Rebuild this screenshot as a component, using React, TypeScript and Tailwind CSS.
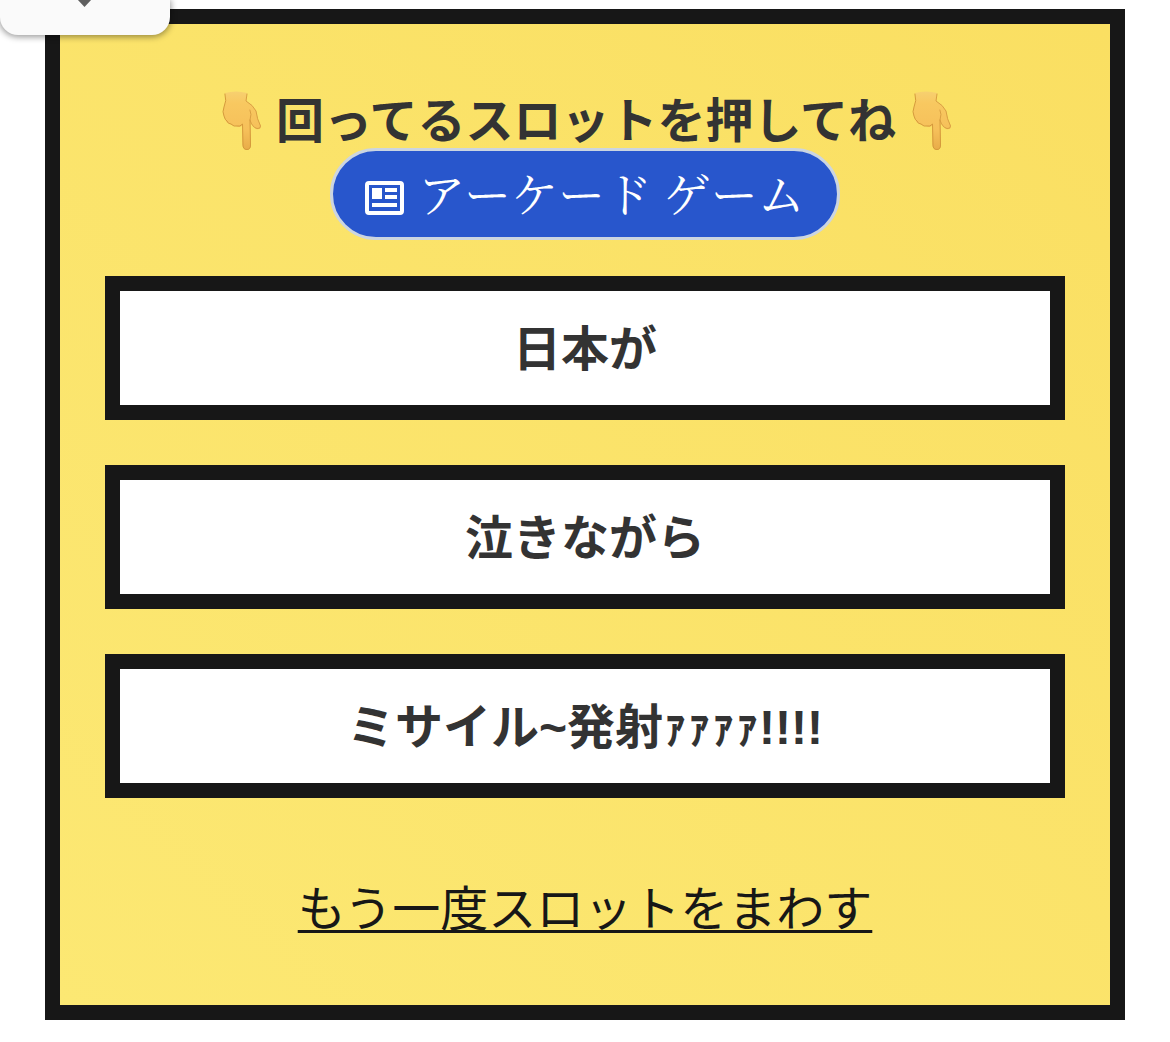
import React from "react";

const phrases = ["日本が", "泣きながら", "ミサイル~発射ｧｧｧｧ!!!!"];

function PointDown({ id }: { id: string }) {
  return (
    <svg viewBox="0 0 40 60" className="h-[60px] w-10 shrink-0" aria-hidden="true">
      <defs>
        <linearGradient id={id} x1="0" y1="0" x2="0" y2="1">
          <stop offset="0" stopColor="#f7d070" />
          <stop offset="0.2" stopColor="#f8c860" />
          <stop offset="0.65" stopColor="#f6c05a" />
          <stop offset="1" stopColor="#e8ac48" />
        </linearGradient>
      </defs>
      <path
        d="M3 3 Q14 0 25 3 L24 11 Q31 15 34 21 Q35 29 39 36 Q39 40 34 39 Q30 37 28.500 32 L29 55 Q28.500 60 25 60 Q21 60 20.500 55 L20 36 Q17 38 14 36 Q10 36 8 34 Q4 33 3 29 Q0 23 2 17 Q5 11 3 3 Z"
        fill={`url(#${id})`}
      />
      <path
        d="M3 4 Q5 11 2 17 Q0 22 2 26 Q3 30 5 31 Q6 34 9 34 Q12 37 15 36 Q18 37 20.500 34 L21 55 Q21 59.500 25 59.500 Q28.500 59.500 28.500 55 L28 30"
        fill="none"
        stroke="#d59a3c"
        strokeWidth="1"
        strokeLinecap="round"
      />
      <path
        d="M25 4 L24 11 Q31 15 34 21 Q35 29 38.500 36 Q38.500 39 35 38.500 Q30 37 28 30 Q30 24 28 20"
        fill="none"
        stroke="#d99f42"
        strokeWidth="1"
        strokeLinecap="round"
      />
    </svg>
  );
}

export default function App() {
  return (
    <main className="relative bg-white px-[45px] pt-[9px] pb-[22px] font-['Liberation_Sans','Noto_Sans_CJK_JP',sans-serif] text-[#333]">
      <button
        aria-label="開く"
        className="absolute top-0 left-0 flex h-[35px] w-[170px] justify-center rounded-b-[18px] bg-[#fafafa] shadow-[0_1px_6px_1px_rgba(0,0,0,0.4)]"
      >
        <svg viewBox="0 0 16 8" className="h-2 w-4" aria-hidden="true">
          <path d="M0 -1 H15 L7.500 7 Z" fill="#5f5f5f" />
        </svg>
      </button>
      <section className="flex flex-col items-center border-[15px] border-[#171717] bg-linear-to-tr from-[#fce873] to-[#fadf62] px-[45px] pt-[66px] pb-[60px]">
        <h1 className="flex h-[60px] items-center pl-1 text-[48px] leading-[60px] font-bold whitespace-nowrap">
          <PointDown id="hand-left" />
          <span className="mr-4 ml-[14px] pt-1">回ってるスロットを押してね</span>
          <PointDown id="hand-right" />
        </h1>
        <button className="-mt-0.5 flex h-[92px] items-center rounded-full border-[3px] border-[#cbd5e1] bg-[#2856cc] pr-8 pl-8 font-['Liberation_Serif','Noto_Serif_CJK_JP','Noto_Sans_CJK_JP',serif] text-[47px] font-normal whitespace-nowrap text-white">
          <svg viewBox="0 0 39 34" className="mt-2 mr-[14px] h-[34px] w-[39px]" aria-hidden="true">
            <rect x="2" y="2" width="35" height="30" rx="2" fill="none" stroke="white" strokeWidth="4" />
            <path d="M7 7H17V18H7ZM20 7H32V11H20ZM20 14H32V18H20ZM7 22H32V26H7Z" fill="white" />
          </svg>
          <span className="pt-1">アーケード ゲーム</span>
        </button>
        <div className="mt-9 flex w-full flex-col gap-[45px]">
          {phrases.map((p) => (
            <button key={p} className="h-36 w-full border-[15px] border-[#171717] bg-white pt-1 text-[48px] leading-[72px] font-bold">
              {p}
            </button>
          ))}
        </div>
        <a href="#again" className="mt-[76px] text-[48px] leading-[71px] text-[#171717] underline decoration-[3px] underline-offset-4 [text-decoration-skip-ink:none]">
          もう一度スロットをまわす
        </a>
      </section>
    </main>
  );
}
